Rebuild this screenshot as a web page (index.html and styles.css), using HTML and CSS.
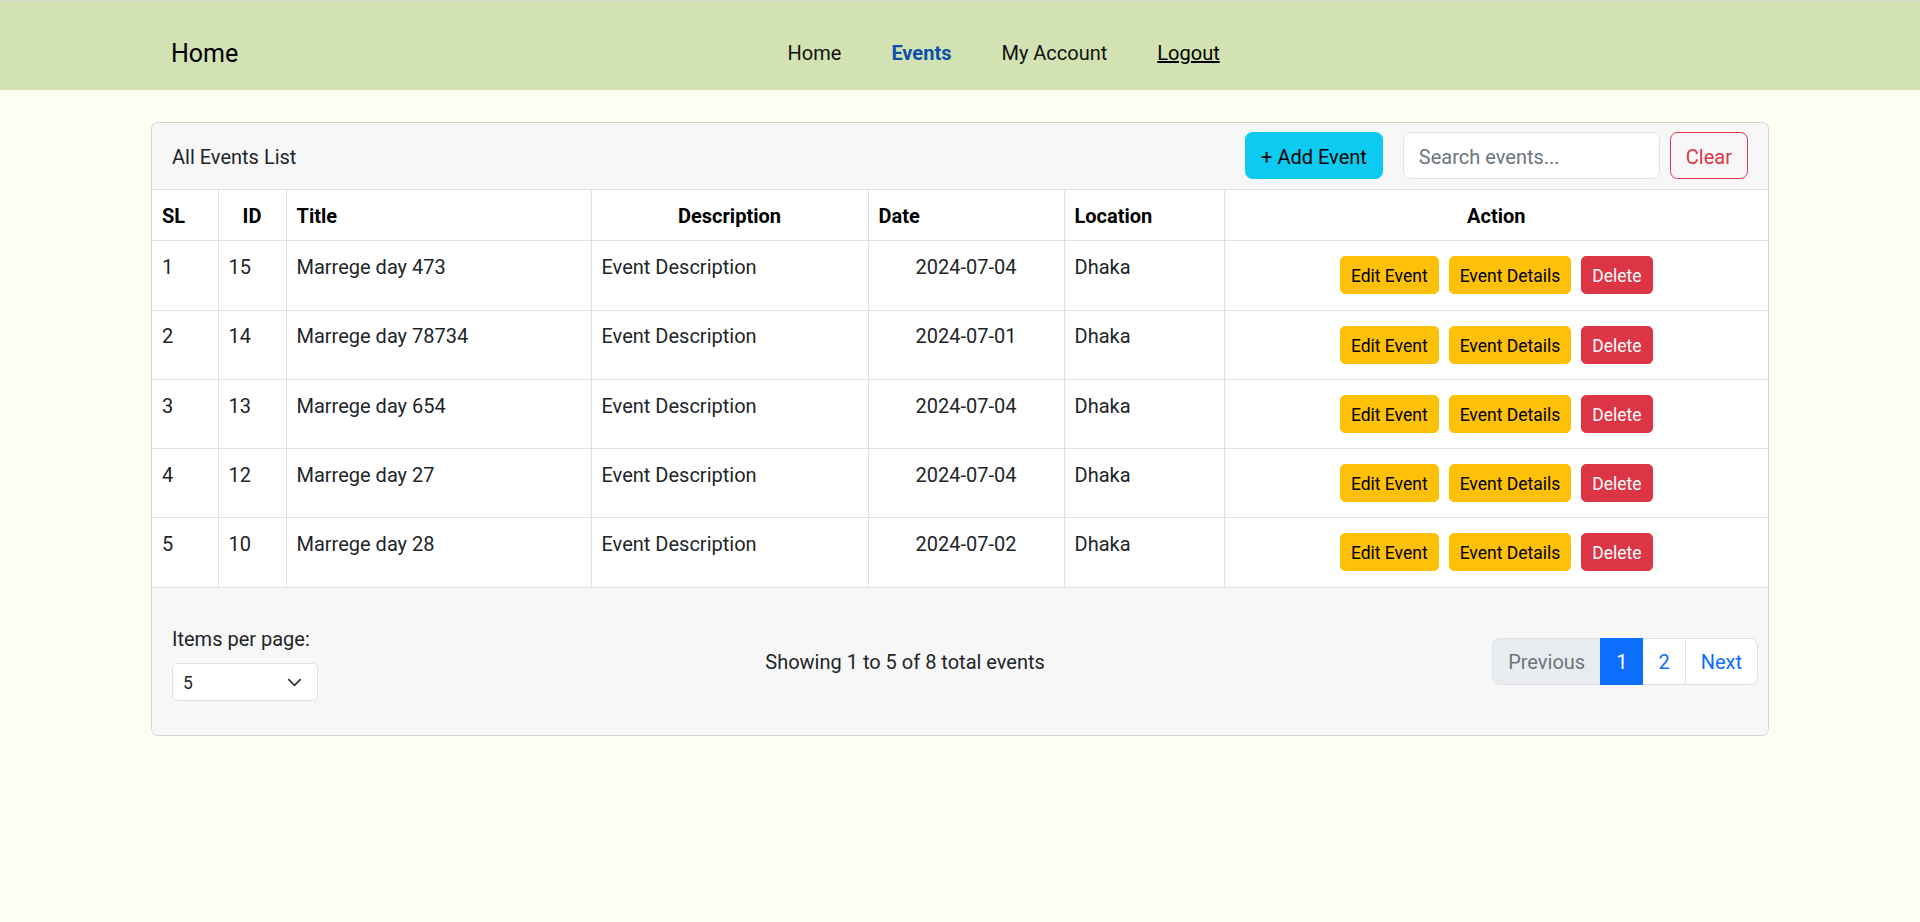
FILE: index.html
```html
<!DOCTYPE html>
<html lang="en">
<head>
<meta charset="utf-8">
<title>Events</title>
<link rel="stylesheet" href="styles.css">
</head>
<body>
<nav class="topbar">
  <a class="brand" href="#">Home</a>
  <ul class="nav-links">
    <li><a class="nav-link" href="#">Home</a></li>
    <li><a class="nav-link active" href="#">Events</a></li>
    <li><a class="nav-link" href="#">My Account</a></li>
    <li><a class="nav-link logout" href="#">Logout</a></li>
  </ul>
</nav>

<main class="page">
  <section class="card">
    <header class="card-header">
      <span class="card-title">All Events List</span>
      <div class="header-tools">
        <button class="btn btn-info">+ Add Event</button>
        <input class="search" type="text" placeholder="Search events...">
        <button class="btn btn-outline-danger">Clear</button>
      </div>
    </header>

    <table class="events">
      <colgroup>
        <col class="c-sl"><col class="c-id"><col class="c-title"><col class="c-desc"><col class="c-date"><col class="c-loc"><col class="c-act">
      </colgroup>
      <thead>
        <tr>
          <th>SL</th>
          <th class="center">ID</th>
          <th>Title</th>
          <th class="center">Description</th>
          <th>Date</th>
          <th>Location</th>
          <th class="center">Action</th>
        </tr>
      </thead>
      <tbody>
        <tr>
          <td>1</td><td>15</td><td>Marrege day 473</td><td>Event Description</td><td class="center">2024-07-04</td><td>Dhaka</td>
          <td class="act"><div class="actions"><button class="btn-sm warn">Edit Event</button><button class="btn-sm warn">Event Details</button><button class="btn-sm danger">Delete</button></div></td>
        </tr>
        <tr>
          <td>2</td><td>14</td><td>Marrege day 78734</td><td>Event Description</td><td class="center">2024-07-01</td><td>Dhaka</td>
          <td class="act"><div class="actions"><button class="btn-sm warn">Edit Event</button><button class="btn-sm warn">Event Details</button><button class="btn-sm danger">Delete</button></div></td>
        </tr>
        <tr>
          <td>3</td><td>13</td><td>Marrege day 654</td><td>Event Description</td><td class="center">2024-07-04</td><td>Dhaka</td>
          <td class="act"><div class="actions"><button class="btn-sm warn">Edit Event</button><button class="btn-sm warn">Event Details</button><button class="btn-sm danger">Delete</button></div></td>
        </tr>
        <tr>
          <td>4</td><td>12</td><td>Marrege day 27</td><td>Event Description</td><td class="center">2024-07-04</td><td>Dhaka</td>
          <td class="act"><div class="actions"><button class="btn-sm warn">Edit Event</button><button class="btn-sm warn">Event Details</button><button class="btn-sm danger">Delete</button></div></td>
        </tr>
        <tr>
          <td>5</td><td>10</td><td>Marrege day 28</td><td>Event Description</td><td class="center">2024-07-02</td><td>Dhaka</td>
          <td class="act"><div class="actions"><button class="btn-sm warn">Edit Event</button><button class="btn-sm warn">Event Details</button><button class="btn-sm danger">Delete</button></div></td>
        </tr>
      </tbody>
    </table>

    <footer class="card-footer">
      <div class="per-page">
        <label class="per-label">Items per page:</label>
        <div class="select">
          <span>5</span>
          <svg class="chev" width="15" height="15" viewBox="0 0 16 16" aria-hidden="true"><path d="m2 5 6 6 6-6" fill="none" stroke="#343a40" stroke-width="2" stroke-linecap="round" stroke-linejoin="round"/></svg>
        </div>
      </div>
      <div class="showing">Showing 1 to 5 of 8 total events</div>
      <ul class="pagination">
        <li class="page-item disabled">Previous</li>
        <li class="page-item active">1</li>
        <li class="page-item">2</li>
        <li class="page-item">Next</li>
      </ul>
    </footer>
  </section>
</main>
</body>
</html>
```

FILE: styles.css
```css
* { box-sizing: border-box; }

html, body {
  margin: 0;
  padding: 0;
}

body {
  background: #fcfff2;
  color: #212529;
  font-family: "Segoe UI", Roboto, "Liberation Sans", Arial, sans-serif;
  font-size: 20px;
  line-height: 30px;
  min-height: 922px;
}

/* ---------- navbar ---------- */
.topbar {
  display: flex;
  align-items: center;
  background: #d2e2b3;
  border-top: 1px solid #dcdcdc;
  height: 90px;
  padding: 33px 171px 18px;
}

.brand {
  font-size: 25px;
  line-height: 37px;
  color: #000;
  text-decoration: none;
  margin-right: 20px;
}

.nav-links {
  list-style: none;
  display: flex;
  gap: 50px;
  margin: 0 auto;
  padding: 0;
}

.nav-link {
  color: #111;
  text-decoration: none;
  font-size: 20px;
  line-height: 30px;
}

.nav-link.active {
  color: #0d4fae;
  font-weight: 700;
}

.nav-link.logout {
  color: #000;
  text-decoration: underline;
}

/* ---------- card ---------- */
.page {
  padding: 32px 151px 0;
}

.card {
  background: #fff;
  border: 1px solid rgba(0, 0, 0, 0.175);
  border-radius: 7.5px;
  overflow: hidden;
}

.card-header {
  display: flex;
  align-items: center;
  justify-content: space-between;
  background: #f7f7f7;
  padding: 9px 20px 10px;
  border-bottom: 1px solid #dee2e6;
}

.card-title {
  font-size: 20px;
  color: #212529;
  padding-top: 2px;
}

.header-tools {
  display: flex;
  align-items: center;
}

.btn {
  font-family: inherit;
  font-size: 20px;
  line-height: 30px;
  padding: 8.5px 15px 6.5px;
  border: 1px solid transparent;
  border-radius: 7.5px;
  height: 47px;
  cursor: pointer;
}

.btn-info {
  background: #0dcaf0;
  border-color: #0dcaf0;
  color: #000;
  margin-right: 20px;
}

.btn-outline-danger {
  background: transparent;
  border-color: #dc3545;
  color: #dc3545;
  margin-left: 10px;
}

.search {
  width: 257px;
  height: 47px;
  font-family: inherit;
  font-size: 20px;
  padding: 8.5px 15px 6.5px;
  border: 1px solid #dee2e6;
  border-radius: 7.5px;
  background: #fff;
  color: #212529;
  outline: none;
}

.search::placeholder {
  color: #6c757d;
}

/* ---------- table ---------- */
.events {
  width: 100%;
  border-collapse: collapse;
  table-layout: fixed;
}

.c-sl { width: 66px; }
.c-id { width: 68px; }
.c-title { width: 305px; }
.c-desc { width: 277px; }
.c-date { width: 196px; }
.c-loc { width: 160px; }

.events th,
.events td {
  padding: 10.75px 10px 9.5px;
  text-align: left;
  vertical-align: top;
  border: 1px solid #dee2e6;
  font-size: 20px;
  line-height: 30px;
}

.events td.act {
  padding: 10px;
}

.events th {
  font-weight: 700;
  color: #000;
}

.events td {
  color: #212529;
}

.events tr > :first-child { border-left: none; }
.events tr > :last-child { border-right: none; }
.events thead tr > * { border-top: none; }
.events tbody tr:last-child > * { border-bottom: none; }

.events .center { text-align: center; }

.actions {
  display: flex;
  justify-content: center;
  align-items: center;
  gap: 10px;
  height: 48.25px;
}

.btn-sm {
  font-family: inherit;
  font-size: 17.5px;
  line-height: 26px;
  padding: 6px 10px 4px;
  border: 1px solid transparent;
  border-radius: 5px;
  height: 38px;
  cursor: pointer;
}

.btn-sm.warn {
  background: #ffc107;
  border-color: #ffc107;
  color: #000;
}

.btn-sm.danger {
  background: #dc3545;
  border-color: #dc3545;
  color: #fff;
}

/* ---------- footer ---------- */
.card-footer {
  display: flex;
  align-items: center;
  justify-content: space-between;
  background: #f7f7f7;
  border-top: 1px solid #dee2e6;
  padding: 34px 10px 34px 20px;
  min-height: 148px;
}

.per-page {
  display: flex;
  flex-direction: column;
}

.per-label {
  font-size: 20px;
  line-height: 30px;
  padding-top: 2px;
  margin-bottom: 9px;
}

.select {
  position: relative;
  display: flex;
  align-items: center;
  width: 146px;
  height: 38px;
  padding: 6px 10px 4px;
  font-size: 17.5px;
  line-height: 26px;
  background: #fff;
  border: 1px solid #dee2e6;
  border-radius: 5px;
}

.chev {
  position: absolute;
  right: 15px;
  top: 11px;
}

.showing {
  font-size: 20px;
  line-height: 30px;
  padding-top: 2px;
}

.pagination {
  list-style: none;
  display: flex;
  margin: 0;
  padding: 0;
}

.page-item {
  font-size: 20px;
  line-height: 30px;
  padding: 8.5px 15px 6.5px;
  border: 1px solid #dee2e6;
  background: #fff;
  color: #0d6efd;
  margin-left: -1px;
}

.page-item:first-child {
  margin-left: 0;
  border-radius: 7.5px 0 0 7.5px;
}

.page-item:last-child {
  border-radius: 0 7.5px 7.5px 0;
}

.page-item.disabled {
  background: #e9ecef;
  color: #6c757d;
}

.page-item.active {
  background: #0d6efd;
  border-color: #0d6efd;
  color: #fff;
  position: relative;
}
```
